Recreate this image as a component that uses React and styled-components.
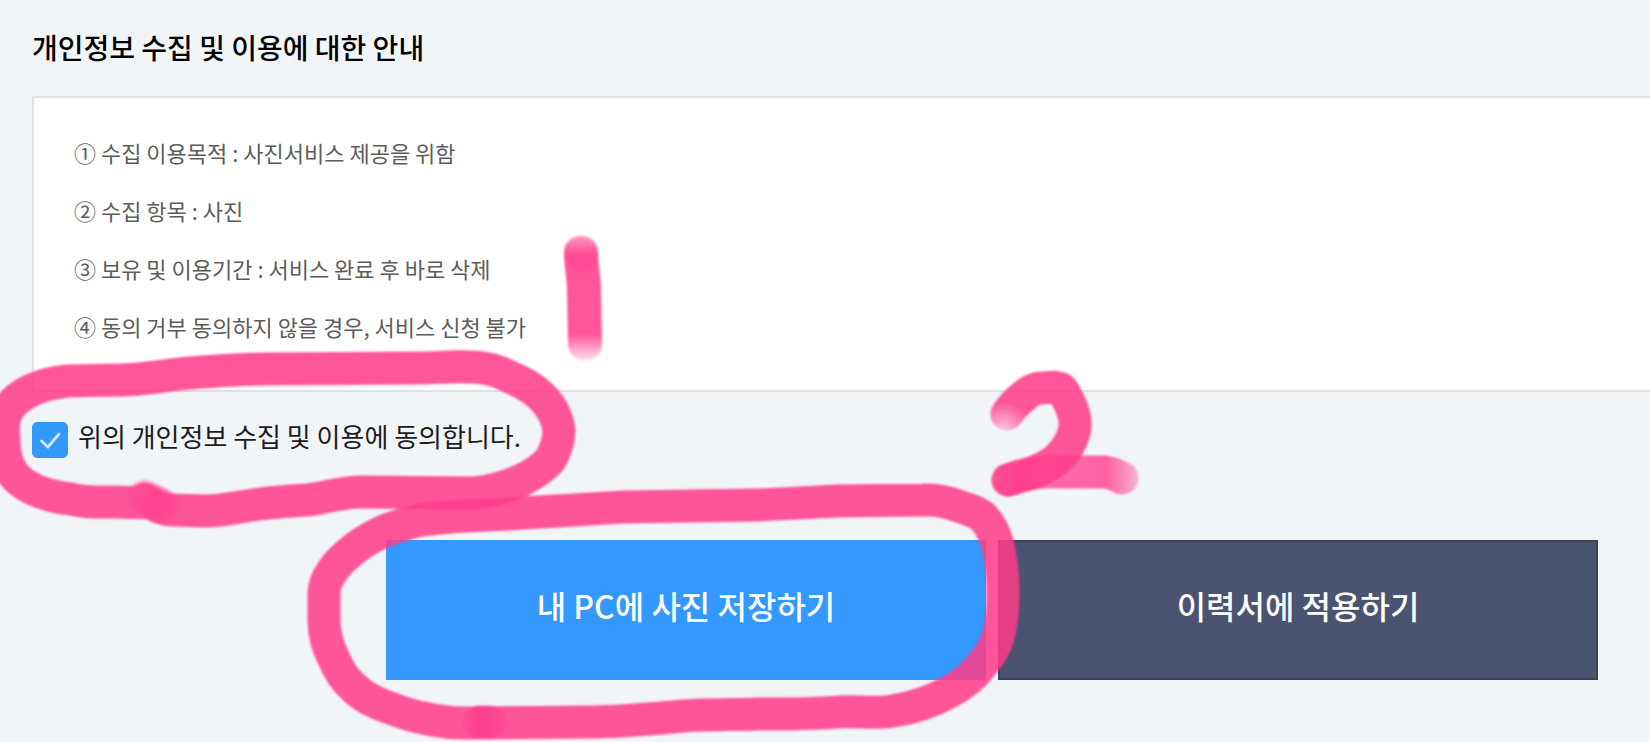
import React, { useState } from 'react';
import styled, { createGlobalStyle, css } from 'styled-components';

const GlobalStyle = createGlobalStyle`
  * {
    box-sizing: border-box;
  }

  body {
    margin: 0;
    background-color: #f2f5f8;
    font-family: 'Noto Sans CJK KR', 'Noto Sans', sans-serif;
  }
`;

const Page = styled.main`
  position: relative;
  min-height: 100vh;
  padding: 30px 0 30px 32px;
  overflow: hidden;
`;

const Title = styled.h1`
  margin: 0 0 32px;
  color: #000;
  font-size: 28px;
  font-weight: 500;
  line-height: 34px;
`;

const Terms = styled.ol`
  margin: 0 0 30px;
  padding: 25px 40px 35px;
  border: 2px solid #e1e1e1;
  border-right: 0;
  background-color: #fff;
  list-style: none;
`;

const Term = styled.li`
  color: #5c5c5c;
  font-size: 22px;
  line-height: 58px;
`;

const Agreement = styled.label`
  display: flex;
  align-items: flex-start;
  gap: 10px;
  margin-bottom: 82px;
  color: #1c1c1c;
  font-size: 26px;
  line-height: 28px;
  cursor: pointer;
`;

const CheckboxHolder = styled.span`
  position: relative;
  display: flex;
`;

const Checkbox = styled.input`
  width: 36px;
  height: 36px;
  margin: 0;
  border: 1px solid #c4c8cc;
  border-radius: 5px;
  background-color: #fff;
  appearance: none;

  &:checked {
    border-color: #3399ff;
    background-color: #3399ff;
  }
`;

const CheckMark = styled.svg`
  position: absolute;
  inset: 0;
  fill: none;
  stroke: #d2e8ff;
  stroke-width: 2.8;
  stroke-linecap: round;
  pointer-events: none;
`;

const Actions = styled.div`
  display: flex;
  justify-content: flex-end;
  gap: 12px;
  padding-right: 52px;
`;

const Button = styled.button`
  flex: 0 1 600px;
  height: 140px;
  padding: 0 0 10px;
  border: 2px solid #3399ff;
  background-color: #3399ff;
  color: #fff;
  font-family: inherit;
  font-size: 32px;
  font-weight: 500;
  line-height: 40px;
  cursor: pointer;

  ${({ $dark }) =>
    $dark &&
    css`
      border-color: #3c4153;
      background-color: #4a536f;
    `}
`;

const Marker = styled.svg`
  position: absolute;
  top: 0;
  left: 0;
  fill: none;
  stroke: #ff3b8a;
  stroke-width: 33;
  stroke-linecap: round;
  stroke-linejoin: round;
  pointer-events: none;
`;

const terms = [
  '① 수집 이용목적 : 사진서비스 제공을 위함',
  '② 수집 항목 : 사진',
  '③ 보유 및 이용기간 : 서비스 완료 후 바로 삭제',
  '④ 동의 거부 동의하지 않을 경우, 서비스 신청 불가',
];

const Fade = ({ id, from, to, stops }) => (
  <linearGradient id={id} gradientUnits="userSpaceOnUse" x1={from[0]} y1={from[1]} x2={to[0]} y2={to[1]}>
    {stops.map(([offset, opacity]) => (
      <stop key={offset} offset={offset} stopColor="#ff3b8a" stopOpacity={opacity} />
    ))}
  </linearGradient>
);

const MarkerStrokes = () => (
  <Marker width="1650" height="742" viewBox="0 0 1650 742" aria-hidden="true">
    <defs>
      <filter id="soft" filterUnits="userSpaceOnUse" x="-40" y="0" width="1690" height="742">
        <feGaussianBlur stdDeviation="1.2" />
      </filter>
      <radialGradient id="fadeTop" gradientUnits="userSpaceOnUse" cx="1003" cy="432" r="30">
        <stop offset="0" stopColor="#ff3b8a" stopOpacity="0.2" />
        <stop offset="1" stopColor="#ff3b8a" stopOpacity="0.87" />
      </radialGradient>
      <Fade id="fadeOne" from={[580, 234]} to={[580, 362]} stops={[[0, 0.2], [0.16, 0.87], [0.78, 0.87], [1, 0.1]]} />
      <Fade id="fadeBar" from={[990, 480]} to={[1139, 480]} stops={[[0, 0.1], [0.16, 0.7], [0.78, 0.8], [1, 0.35]]} />
      <Fade id="fadeBlob" from={[124, 488]} to={[182, 514]} stops={[[0, 0.05], [0.5, 0.6], [0.75, 0.5], [1, 0]]} />
      <Fade id="fadeBlobTwo" from={[455, 722]} to={[516, 722]} stops={[[0, 0], [0.4, 0.8], [0.6, 0.6], [1, 0]]} />
    </defs>
    <g filter="url(#soft)">
      {/* ring around the agreement */}
      <path
        opacity="0.87"
        d="M144 499 C152 504 160 510 174 510 L205 511 C222 511 238 507 253 505 C272 502 290 501 308 500
          C326 498 340 492 362 492 L474 493 C492 491 507 487 522 480 C534 474 543 468 550 460
          C556 450 559 440 559 430 C557 417 551 406 542 397 C532 387 521 382 510 377 C497 370 484 367 470 367
          C452 366 436 368 419 368 L269 369 C243 369 215 371 190 373 C165 375 142 380 119 380 L68 381
          C44 383 20 392 9 408 C2 419 3 430 4 440 C4 458 9 472 20 481 C34 492 52 497 71 499 C85 503 99 502 115 502 L150 503"
      />
      <path stroke="url(#fadeBlob)" d="M143 496 L162 505" />
      {/* ring around the save button */}
      <path
        opacity="0.87"
        d="M472 723 L590 722 C618 722 645 719 673 717 C701 714 728 715 757 714 C784 714 811 714 840 712
          C858 711 876 714 893 711 C911 708 931 702 947 693 C959 687 971 679 980 667 C988 657 994 650 998 637
          C1002 623 1003 608 1003 593 C1003 574 1001 558 997 542 C993 531 990 524 983 517 C978 513 973 511 967 509
          C952 504 940 499 923 500 L837 501 C812 502 784 504 757 505 L623 507 C589 509 556 511 523 513
          C499 515 474 515 450 517 C436 519 424 519 413 522 C401 525 390 528 380 533 C370 538 361 543 353 550
          C344 557 337 564 333 570 C328 577 324 585 324 593 L324 620 C324 633 327 645 333 657
          C338 669 344 679 353 687 C360 694 368 699 377 703 C392 709 408 715 423 718 C437 721 450 723 463 723 Z"
      />
      <path stroke="url(#fadeBlobTwo)" d="M479 722 L490 722" />
      {/* step one */}
      <path stroke="url(#fadeOne)" strokeWidth="34" d="M581 252 C581 267 584 277 584 290 L585 344" />
      <path opacity="0.35" d="M581 253 L582 256" />
      {/* step two */}
      <path
        stroke="url(#fadeTop)"
        d="M1007 414 C1012 407 1016 402 1023 397 C1030 390 1035 388 1043 388 C1053 387 1060 386 1063 391
          C1071 404 1076 416 1075 427 C1073 442 1065 452 1056 460 C1044 470 1027 475 1008 480"
      />
      <path stroke="url(#fadeBar)" d="M1008 480 C1022 474 1036 472 1050 472 L1105 472 C1112 473 1117 475 1122 478" />
    </g>
  </Marker>
);

const App = () => {
  const [agreed, setAgreed] = useState(true);

  return (
    <>
      <GlobalStyle />
      <Page>
        <Title>개인정보 수집 및 이용에 대한 안내</Title>
        <Terms>
          {terms.map(term => (
            <Term key={term}>{term}</Term>
          ))}
        </Terms>
        <Agreement htmlFor="agree">
          <CheckboxHolder>
            <Checkbox id="agree" type="checkbox" checked={agreed} onChange={e => setAgreed(e.target.checked)} />
            {agreed && (
              <CheckMark width="36" height="36" viewBox="0 0 36 36" aria-hidden="true">
                <path d="M9.5 19 L16 25 L27 12" />
              </CheckMark>
            )}
          </CheckboxHolder>
          위의 개인정보 수집 및 이용에 동의합니다.
        </Agreement>
        <Actions>
          <Button type="button">내 PC에 사진 저장하기</Button>
          <Button type="button" $dark>
            이력서에 적용하기
          </Button>
        </Actions>
        <MarkerStrokes />
      </Page>
    </>
  );
};

export default App;
